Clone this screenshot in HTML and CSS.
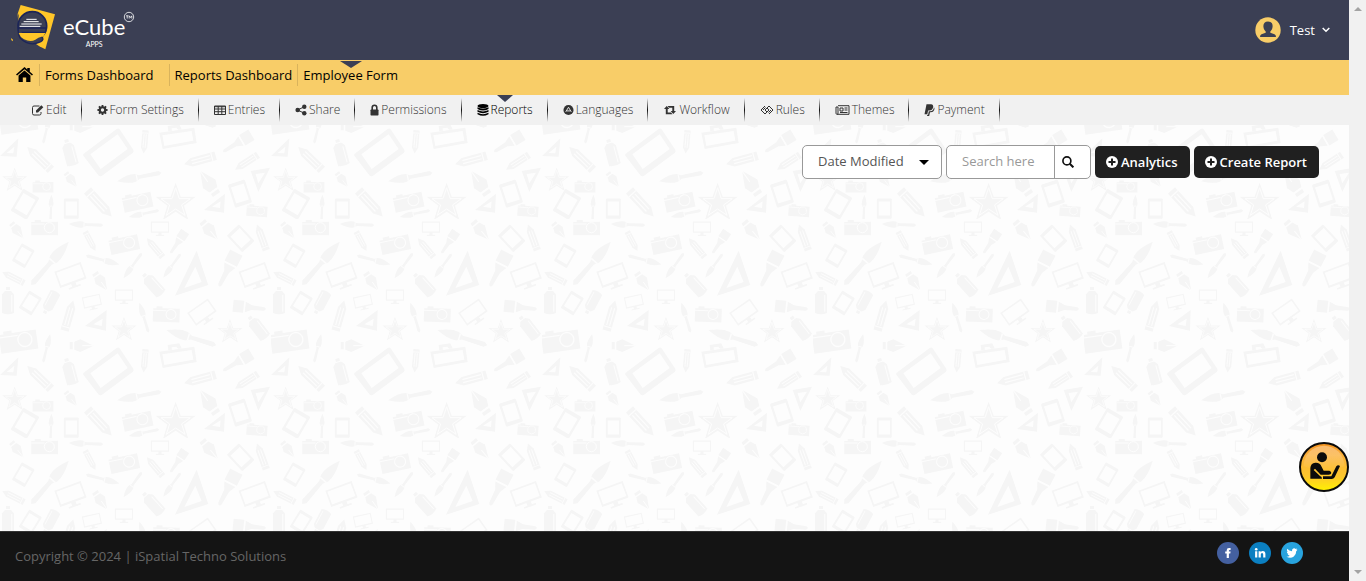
FILE: index.html
```html
<!DOCTYPE html>
<html lang="en">
<head>
<meta charset="utf-8">
<title>eCube Apps - Reports</title>
<link rel="stylesheet" href="styles.css">
</head>
<body>
<svg class="backdrop" aria-hidden="true">
  <defs>
    <g id="pencil"><path d="M-11-38H11V24L0 44L-11 24Z"/><path class="cut" d="M-11-28H11M-4-24V24M4-24V24"/></g>
    <g id="phone"><path fill-rule="evenodd" d="M-24-38H24Q28-38 28-34V34Q28 38 24 38H-24Q-28 38-28 34V-34Q-28-38-24-38ZM-21-27H21V26H-21Z"/></g>
    <g id="camera"><path d="M-40-16H-30V-22H-12V-17H40V24H-40Z"/><circle class="cut" cx="14" cy="1" r="15"/><path class="cut" d="M-40-10H0"/></g>
    <g id="brush"><path d="M0-52L5-46L4 0L9 10Q12 26 0 52Q-12 26-9 10L-4 0L-5-46Z"/><path class="cut" d="M-7 6H7"/></g>
    <g id="flat"><path d="M-18-46H18V-14H-18ZM-16-9H16L7 10L5 48Q0 58-5 48L-7 10Z"/></g>
    <g id="nib"><path d="M0 36L-19-4L-12-22H12L19-4Z"/><path d="M-11-27H11V-36H-11Z"/><path class="cut" d="M0 36V2"/></g>
    <g id="can"><path d="M-18-22L-9-32H9L18-22V34Q0 42-18 34Z"/><path d="M-6-44H6V-35H-6Z"/><path class="cut" d="M11-20V30"/></g>
    <g id="monitor"><path fill-rule="evenodd" d="M-42-28H42V24H-42ZM-37-23V18H37V-23ZM-7 24H7V33H19V38H-19V33H-7Z"/></g>
    <g id="star"><path d="M0-60L15-18H60L25 9L38 52L0 27L-38 52L-25 9L-60-18H-15Z"/><path class="cut" d="M0-45L11-12H44L18 7L28 38L0 19L-28 38L-18 7L-44-12H-11Z"/></g>
    <pattern id="tools" width="271" height="219" patternUnits="userSpaceOnUse">
      <g class="tool" transform="scale(.3333)">
        <use href="#nib" transform="translate(52 35) rotate(-38) scale(.8)"/>
        <use href="#camera" transform="translate(134 25)"/>
        <use href="#brush" transform="translate(258 17) rotate(92)"/>
        <use href="#pencil" transform="translate(270 65) rotate(-28) scale(.8)"/>
        <use href="#monitor" transform="translate(480 26) scale(.65)"/>
        <use href="#camera" transform="translate(372 73) rotate(-12) scale(1.1)"/>
        <use href="#pencil" transform="translate(466 88) rotate(140) scale(.9)"/>
        <use href="#flat" transform="translate(535 68) rotate(34) scale(.8)"/>
        <use href="#nib" transform="translate(630 35) rotate(-40)"/>
        <use href="#phone" transform="translate(722 58) rotate(-43) scale(.9)"/>
        <use href="#pencil" transform="translate(786 58) rotate(160)"/>
        <use href="#phone" transform="translate(70 110) rotate(30) scale(.8)"/>
        <use href="#brush" transform="translate(150 133) rotate(221) scale(1.65)"/>
        <use href="#monitor" transform="translate(212 170) rotate(-20)"/>
        <use href="#brush" transform="translate(308 123) rotate(-75)"/>
        <use href="#brush" transform="translate(398 140) rotate(36) scale(.9)"/>
        <use href="#brush" transform="translate(516 140) rotate(36) scale(.85)"/>
        <use href="#can" transform="translate(460 198) rotate(-42)"/>
        <path fill-rule="evenodd" d="M590 95L625 198L525 230ZM586 143L605 189L553 207Z"/>
        <use href="#flat" transform="translate(685 148) rotate(27) scale(1.15)"/>
        <use href="#monitor" transform="translate(765 170) rotate(-20)"/>
        <use href="#nib" transform="translate(303 188) rotate(-35) scale(.9)"/>
        <use href="#pencil" transform="translate(42 177) rotate(117) scale(.9)"/>
        <use href="#can" transform="translate(24 248)"/>
        <use href="#phone" transform="translate(91 252) rotate(32) scale(.8)"/>
        <use href="#can" transform="translate(152 248) rotate(208) scale(.9)"/>
        <use href="#monitor" transform="translate(276 248) rotate(-12) scale(.65)"/>
        <use href="#monitor" transform="translate(372 230) scale(.65)"/>
        <use href="#pencil" transform="translate(206 293) rotate(196) scale(1.15)"/>
        <use href="#brush" transform="translate(432 296) rotate(163) scale(.9)"/>
        <use href="#camera" transform="translate(499 285) rotate(2)"/>
        <use href="#monitor" transform="translate(607 281) rotate(-35) scale(.9)"/>
        <use href="#flat" transform="translate(745 265) rotate(-84)"/>
        <path fill-rule="evenodd" d="M320 273L318 335L255 321ZM308 299L305 321L280 316Z"/>
        <use href="#star" transform="translate(372 331) scale(.63)"/>
        <use href="#brush" transform="translate(574 356) rotate(107) scale(1.5)"/>
        <use href="#star" transform="translate(690 338) scale(.63)"/>
        <use href="#can" transform="translate(775 328) rotate(-38)"/>
        <use href="#camera" transform="translate(55 363) rotate(-8) scale(1.4)"/>
        <use href="#brush" transform="translate(140 388) rotate(194) scale(.85)"/>
        <use href="#nib" transform="translate(245 380) rotate(-90)"/>
        <path fill-rule="evenodd" d="M55 415L50 470L0 468ZM43 440L40 460L20 459Z"/>
        <use href="#pencil" transform="translate(120 478) rotate(134) scale(1.2)"/>
        <use href="#can" transform="translate(210 461) rotate(-15)"/>
        <path fill-rule="evenodd" d="M254 459L350 387Q356 384 360 389L400 449Q403 454 398 459L305 528Q299 531 295 526L250 467Q247 462 254 459ZM271 463L302 507L383 447L353 403Z"/>
        <use href="#pencil" transform="translate(434 423) rotate(5) scale(.85)"/>
        <path fill-rule="evenodd" d="M478 398L583 383L590 429L488 447ZM487 406L493 438L580 422L575 393ZM505 393L503 378L538 373L545 388L534 389L529 383L515 385L516 392Z"/>
        <use href="#pencil" transform="translate(603 479) rotate(75) scale(1.2)"/>
        <use href="#flat" transform="translate(715 428) rotate(59) scale(1)"/>
        <use href="#pencil" transform="translate(742 485) rotate(57)"/>
        <use href="#star" transform="translate(44 540) scale(.63)"/>
        <use href="#camera" transform="translate(129 559) scale(.78)"/>
        <use href="#nib" transform="translate(214 540) rotate(-38) scale(.75)"/>
        <use href="#brush" transform="translate(418 531) rotate(79) scale(1.3)"/>
        <use href="#nib" transform="translate(625 548) rotate(145) scale(1.2)"/>
        <path fill-rule="evenodd" d="M752 513L810 503L775 576ZM767 522L795 518L775 550Z"/>
        <use href="#phone" transform="translate(75 613) rotate(30)"/>
        <use href="#brush" transform="translate(153 623) rotate(182) scale(.75)"/>
        <use href="#phone" transform="translate(214 626) scale(.8)"/>
        <use href="#pencil" transform="translate(296 608) rotate(-43) scale(1.3)"/>
        <use href="#camera" transform="translate(412 603) rotate(-12) scale(1.1)"/>
        <use href="#brush" transform="translate(432 641) rotate(78) scale(.9)"/>
        <use href="#star" transform="translate(527 608)"/>
        <path fill-rule="evenodd" d="M675 581L672 638L612 630ZM662 604L660 624L636 620Z"/>
        <use href="#phone" transform="translate(720 581) rotate(-18) scale(.95)"/>
        <use href="#camera" transform="translate(771 631) rotate(4) scale(.78)"/>
      </g>
    </pattern>
  </defs>
  <rect width="100%" height="100%" fill="url(#tools)"/>
</svg>

<div class="page">
  <header class="topbar">
    <a class="brand" href="#" aria-label="eCube Apps">
      <svg class="brand-mark" viewBox="0 0 135 135" aria-hidden="true">
        <path fill="#ffc629" d="M29 0L132 28L103 133L85 124L22 81L20 26Z"/>
        <path fill="#ffc629" d="M0 99L6 104L5 109L1 105Z"/>
        <path fill="#3b3f54" d="M10 60L24 25L18 85L60 122L45 130L10 115Z"/>
        <circle cx="64" cy="63" r="43" fill="#3b3f54" stroke="#1c2558" stroke-width="5"/>
        <path fill="#ffc629" d="M22 72H94Q100 79 106 73Q103 98 79 105Q64 116 47 108Q27 99 22 72Z"/>
        <path fill="#3b3f54" stroke="#1c2558" stroke-width="4" d="M22 69H106L103 82H35Q48 99 68 98Q92 91 95 98Q99 108 82 113Q53 124 28 100Q20 87 22 69Z"/>
        <path fill="#ffc629" d="M23 84H98L96 94Q80 98 73 104Q59 112 39 103Q27 96 23 84Z"/>
        <path stroke="#fff" stroke-width="3" d="M46 43H77M38 50H83M31 57H92M26 64H88"/>
      </svg>
      <span class="brand-text"><span class="brand-name">eCube</span><span class="brand-sub">APPS</span></span>
      <svg class="brand-tm" viewBox="0 0 12 12" aria-hidden="true"><circle cx="6" cy="6" r="4.7" fill="none" stroke="#fff" stroke-width=".8"/><path fill="none" stroke="#fff" stroke-width=".8" d="M3 4.8H5.4M4.2 4.8V7.5M6.2 7.5V4.8L7.5 6.5L8.8 4.8V7.5"/></svg>
    </a>
    <button class="user" type="button">
      <svg class="avatar" viewBox="0 0 26 26" aria-hidden="true"><circle cx="13" cy="13" r="12.7" fill="#f8cd68"/><path fill="#3b3f54" d="M13 4.5C16.200 4.500 17.800 6.600 17.600 9.600C17.400 12.200 16.500 13.500 15.300 14.600V15.700L19.500 17.200Q21 18 21 20H5Q5 18 6.500 17.200L10.700 15.700V14.600C9.500 13.500 8.600 12.200 8.400 9.600C8.200 6.600 9.800 4.500 13 4.500Z"/></svg>
      <span>Test</span>
      <svg class="chevron" viewBox="0 0 8 6" aria-hidden="true"><path fill="none" stroke="#fff" stroke-width="1.500" d="M.7 1L4 4.300L7.300 1"/></svg>
    </button>
  </header>

  <nav class="mainnav" aria-label="Main">
    <a class="home" href="#" aria-label="Home"><svg viewBox="0 0 16 14" aria-hidden="true"><path d="M8 0L10.600 2.200V.8H13V4.300L16 6.900L15 8L8 2.100L1 8L0 6.900Z"/><path d="M8 3.300L13.600 8V14H9.600V9.800H6.400V14H2.400V8Z"/></svg></a>
    <a class="wide" href="#">Forms Dashboard</a>
    <a href="#">Reports Dashboard</a>
    <a class="current" href="#">Employee Form</a>
  </nav>

  <nav class="subnav" aria-label="Form">
    <a href="#"><svg class="w13" viewBox="0 0 12 12" aria-hidden="true"><path class="line" d="M8 2H2.500Q1 2 1 3.500V9.500Q1 11 2.500 11H8Q9.500 11 9.500 9.500V8"/><path d="M4.500 6.500L9.800 1.200L11.800 3.200L6.500 8.500H4.500Z"/></svg>Edit</a>
    <a href="#"><svg class="w11" viewBox="0 0 12 12" aria-hidden="true"><circle class="ring" cx="6" cy="6" r="3"/><path class="teeth" d="M6 .5V3M6 9V11.500M.5 6H3M9 6H11.500M2.100 2.100L3.800 3.800M8.200 8.200L9.900 9.900M9.900 2.100L8.200 3.800M3.800 8.200L2.100 9.900"/></svg>Form Settings</a>
    <a href="#"><svg viewBox="0 0 12 12" aria-hidden="true"><path class="line" d="M.5 2H11.500V10.500H.5ZM.5 2.700H11.500M.5 5H11.500M.5 7.700H11.500M4.200 2V10.500M7.800 2V10.500"/></svg>Entries</a>
    <a href="#"><svg viewBox="0 0 12 12" aria-hidden="true"><circle cx="2.700" cy="6" r="2.300"/><circle cx="9.300" cy="2.700" r="2.200"/><circle cx="9.300" cy="9.300" r="2.200"/><path class="line" d="M9.300 2.700L2.700 6L9.300 9.300"/></svg>Share</a>
    <a href="#"><svg class="w9" viewBox="0 0 9 12" aria-hidden="true"><rect x=".5" y="5.500" width="8" height="6" rx=".7"/><path fill="none" stroke="currentColor" stroke-width="1.600" d="M2.200 6V3.600Q2.200 1.300 4.500 1.300T6.800 3.600V6"/></svg>Permissions</a>
    <a class="current" href="#"><svg viewBox="0 0 12 12" aria-hidden="true"><ellipse cx="6" cy="2" rx="5.500" ry="2"/><path d="M.5 3.200Q6 6 11.500 3.200V5Q6 8 .5 5ZM.5 6Q6 8.900 11.500 6V7.800Q6 10.600 .5 7.800ZM.5 8.800Q6 11.600 11.500 8.800V10.300Q6 13.400 .5 10.300Z"/></svg>Reports</a>
    <a href="#"><svg class="w11" viewBox="0 0 12 12" aria-hidden="true"><circle cx="6" cy="6" r="5.500"/><path fill="none" stroke="#f1f1f1" d="M3 8L6 3L9 8M4 7H8"/></svg>Languages</a>
    <a href="#"><svg class="w14" viewBox="0 0 12 12" aria-hidden="true"><path d="M0 5L2.700 2L5.400 5H3.700V8.500H7L8.500 10.300H1.800V5ZM12 7L9.300 10L6.600 7H8.300V3.700H5L3.500 1.900H10.200V7Z"/></svg>Workflow</a>
    <a href="#"><svg class="w14" viewBox="0 0 14 12" aria-hidden="true"><path class="line" d="M5 2L1 6L5 10L9 6L7 4M3 6L5.500 3.500M9 10L13 6L9 2L5 6L7 8M11 6L8.500 8.500"/></svg>Rules</a>
    <a href="#"><svg class="w15" viewBox="0 0 14 12" aria-hidden="true"><path class="line" d="M2.500 1.700H13.500V10.300H1.500Q.5 10.300 .5 9.300V3H2.500V9.300Q2.500 10.300 1.500 10.300M4.500 4H7.500V7H4.500ZM9 4H12M9 6H12M4.500 8.500H12"/></svg>Themes</a>
    <a href="#"><svg class="w11" viewBox="0 0 10 12" aria-hidden="true"><path d="M2 .3H6.500Q9.300 .7 8.600 3.600Q7.800 6.500 5 6.500H3.600L2.800 10.200H0Z"/><path d="M9.500 3.200Q10.400 4.500 9.700 6Q8.900 8.200 6.500 8.200H5.500L4.700 11.900H2.500L2.800 10.800H3.600L4.300 7.300H5.500Q9 7 9.500 3.200Z"/></svg>Payment</a>
  </nav>

  <main>
    <form class="tools">
      <div class="sort">
        <select aria-label="Sort by"><option>Date Modified</option><option>Name</option></select>
        <svg viewBox="0 0 10 5" aria-hidden="true"><path d="M0 0H10L5 5Z"/></svg>
      </div>
      <div class="search">
        <input type="text" placeholder="Search here" aria-label="Search">
        <button type="button" aria-label="Search"><svg viewBox="0 0 13 13" aria-hidden="true"><circle cx="5.300" cy="5.300" r="4.300" fill="none" stroke="#111" stroke-width="1.800"/><path stroke="#111" stroke-width="2.200" d="M8.400 8.400L12.300 12.300"/></svg></button>
      </div>
      <button class="action" type="button"><svg viewBox="0 0 12 12" aria-hidden="true"><circle cx="6" cy="6" r="6" fill="#fff"/><path stroke="#202020" stroke-width="2" d="M6 2.500V9.500M2.500 6H9.500"/></svg>Analytics</button>
      <button class="action" type="button"><svg viewBox="0 0 12 12" aria-hidden="true"><circle cx="6" cy="6" r="6" fill="#fff"/><path stroke="#202020" stroke-width="2" d="M6 2.500V9.500M2.500 6H9.500"/></svg>Create Report</button>
    </form>
  </main>

  <footer>
    <p>Copyright © 2024 | iSpatial Techno Solutions</p>
    <div class="social">
      <a href="#" aria-label="Facebook"><svg viewBox="0 0 22 22" aria-hidden="true"><circle cx="11" cy="11" r="11" fill="#4460a0"/><path fill="#fff" d="M9.700 16V11.400H8.200V9.500H9.700V8.300Q9.700 6 12 6H13.600V7.900H12.600Q11.900 7.900 11.900 8.600V9.500H13.600L13.300 11.400H11.900V16Z"/></svg></a>
      <a href="#" aria-label="LinkedIn"><svg viewBox="0 0 22 22" aria-hidden="true"><circle cx="11" cy="11" r="11" fill="#0b7fc1"/><circle cx="7.200" cy="7.300" r="1.300" fill="#fff"/><path fill="#fff" d="M6.100 9.300H8.300V15.600H6.100ZM9.600 9.300H11.700V10.200Q12.300 9.100 13.800 9.100Q16.400 9.100 16.400 12.100V15.600H14.200V12.500Q14.200 10.900 13.100 10.900Q11.800 10.900 11.800 12.500V15.600H9.600Z"/></svg></a>
      <a href="#" aria-label="Twitter"><svg viewBox="0 0 22 22" aria-hidden="true"><circle cx="11" cy="11" r="11" fill="#28a3de"/><path fill="#fff" d="M16.500 7.700L15.200 9.200Q15.300 12.500 12.800 14.600Q9.400 16.900 5.500 14.700Q7.500 14.700 8.700 13.700Q7.100 13.500 6.600 12.100H7.500Q5.900 11.400 5.800 9.700L6.700 9.900Q5.300 8.500 6.200 6.800Q8.200 9.100 11 9.200Q10.800 7.200 12.200 6.500Q13.600 5.900 14.700 6.900L16.100 6.400L15.300 7.700Z"/></svg></a>
    </div>
  </footer>
</div>

<button class="helper" type="button" aria-label="Support">
  <svg viewBox="0 0 150 150" aria-hidden="true">
    <defs><linearGradient id="amber" x2="0" y2="1"><stop offset="0" stop-color="#f5921e"/><stop offset=".25" stop-color="#fbb03b"/><stop offset=".7" stop-color="#fdc72c"/><stop offset="1" stop-color="#fff200"/></linearGradient>
    <linearGradient id="shine" x2="0" y2="1"><stop offset="0" stop-color="#fff" stop-opacity=".35"/><stop offset="1" stop-color="#fff" stop-opacity="0"/></linearGradient></defs>
    <circle cx="75" cy="75" r="72" fill="url(#amber)" stroke="#0b0b0b" stroke-width="6"/>
    <path fill="url(#shine)" d="M14 72A61 61 0 0 1 136 72Q75 100 14 72Z"/>
    <g fill="#0b0b0b"><circle cx="69" cy="46" r="15"/><path d="M34 110V78Q35 63 49 62Q63 61 67 73L74 86H91Q97 88 97 93Q96 98 89 98H65L48 80L44 84L63 102Q69 104 69 110Z"/><path d="M72 103H97L112 73Q117 67 123 72L107 106Q104 111 98 111H72Z"/></g>
  </svg>
</button>

<div class="scrollbar" aria-hidden="true"><svg viewBox="0 0 8 4"><path d="M0 4H8L4 0Z"/></svg><svg viewBox="0 0 8 4"><path d="M0 0H8L4 4Z"/></svg></div>
</body>
</html>
```
FILE: styles.css
```css
* { box-sizing: border-box; }
body {
  margin: 0;
  min-height: 100vh;
  display: flex;
  background: #fdfdfd;
  color: #333;
  font: 13px/20px "Open Sans", sans-serif;
}
a { color: inherit; text-decoration: none; }
button, input, select { font: inherit; color: inherit; margin: 0; }
button { cursor: pointer; }
svg { display: block; flex: none; }

.backdrop { position: absolute; inset: 0; width: 100%; height: 100%; z-index: -1; }
.tool { fill: #f5f5f5; }
.cut { fill: none; stroke: #fdfdfd; stroke-width: 3; }

.page { flex: 1; min-width: 0; display: flex; flex-direction: column; }

.topbar {
  height: 60px;
  display: flex;
  justify-content: space-between;
  padding: 0 19px 0 11px;
  background: #3b3f54;
  color: #fff;
}
.brand { display: flex; align-items: flex-start; padding-top: 5px; }
.brand-mark { width: 45px; height: 45px; }
.brand-text { display: flex; flex-direction: column; align-items: center; padding: 8px 0 0 7px; }
.brand-name { font: 400 22px/27px Lato, sans-serif; }
.brand-sub { font: 7px/9px Lato, sans-serif; }
.brand-tm { width: 12px; height: 12px; margin: 6px 0 0 -2px; }
.user { display: flex; align-items: center; border: 0; padding: 0 0 1px; background: none; color: #fff; }
.avatar { width: 26px; height: 26px; margin-right: 9px; }
.chevron { width: 8px; height: 6px; margin-left: 7px; }

.mainnav { height: 35px; display: flex; align-items: center; background: #f8cd68; color: #000; padding: 0 12px; }
.mainnav a { position: relative; padding: 0 5px; line-height: 22px; margin-bottom: 5px; border-left: 1px solid #d9b35c; }
.mainnav .home { border: 0; height: 22px; padding: 0 6px 2px 4px; display: flex; align-items: center; }
.home svg { width: 17px; height: 15px; }
.mainnav .wide { padding-right: 15px; }
.mainnav .current::before, .subnav .current::before {
  content: "";
  position: absolute;
  left: 50%;
  top: -3px;
  border: solid transparent;
  border-width: 7px 11px 0;
  border-top-color: #3b3f54;
  transform: translateX(-50%);
}

.subnav { height: 30px; display: flex; background: #f1f1f1; padding-left: 16px; font-size: 12px; font-weight: 300; }
.subnav a { position: relative; display: flex; align-items: center; gap: 2px; padding: 0 15px; }
.subnav a::after {
  content: "";
  position: absolute;
  right: 0;
  top: 3px;
  width: 1px;
  height: 24px;
  background: linear-gradient(#f1f1f1, #111 50%, #f1f1f1);
}
.subnav svg { width: 12px; height: 12px; fill: currentColor; }
.subnav .w9 { width: 9px; }
.subnav .w11 { width: 11px; }
.subnav .w13 { width: 13px; }
.subnav .w14 { width: 14px; }
.subnav .w15 { width: 15px; }
.subnav .line { fill: none; stroke: currentColor; }
.ring { fill: none; stroke: currentColor; stroke-width: 2.4; }
.teeth { stroke: currentColor; stroke-width: 2; }
.subnav .current { color: #000; }
.subnav .current::before { top: 0; border-width: 7px 8px 0; }

main { flex: 1; padding: 20px 30px; }
.tools { display: flex; justify-content: flex-end; align-items: center; gap: 4px; }
.sort { position: relative; }
.sort select {
  width: 140px;
  height: 34px;
  padding: 0 15px 2px;
  border: 1px solid #999;
  border-radius: 5px;
  background: #fff;
  color: #555;
  appearance: none;
}
.sort svg { position: absolute; right: 13px; top: 15px; width: 10px; height: 5px; pointer-events: none; }
.search { display: flex; width: 145px; height: 34px; border: 1px solid #999; border-radius: 5px; background: #fff; overflow: hidden; }
.search input { flex: 1; min-width: 0; border: 0; padding: 0 15px 2px; background: none; outline: 0; }
.search input::placeholder { color: #999; }
.search button { width: 36px; border: 0; border-left: 1px solid #999; padding: 0 0 0 7px; background: none; }
.search svg { width: 12px; height: 12px; }
.action {
  display: flex;
  align-items: center;
  gap: 3px;
  height: 32px;
  padding: 0 12px 0 11px;
  border: 0;
  border-radius: 5px;
  background: #202020;
  color: #fff;
  font-weight: 600;
}
.action svg { width: 12px; height: 12px; }

footer {
  height: 50px;
  display: flex;
  align-items: center;
  justify-content: space-between;
  padding: 0 46px 2px 15px;
  border-top: 1px solid #333;
  background: #141414;
  color: #666;
}
footer p { margin: 0; }
.social { display: flex; gap: 10px; padding-bottom: 6px; }
.social svg { width: 22px; height: 22px; }

.helper { position: fixed; right: 17px; bottom: 89px; width: 50px; height: 50px; padding: 0; border: 0; background: none; }
.helper svg { width: 50px; height: 50px; }

.scrollbar { width: 17px; display: flex; flex-direction: column; justify-content: space-between; align-items: center; padding: 7px 0; background: #f1f1f1; }
.scrollbar svg { width: 8px; height: 4px; fill: #a3a3a3; }
```
